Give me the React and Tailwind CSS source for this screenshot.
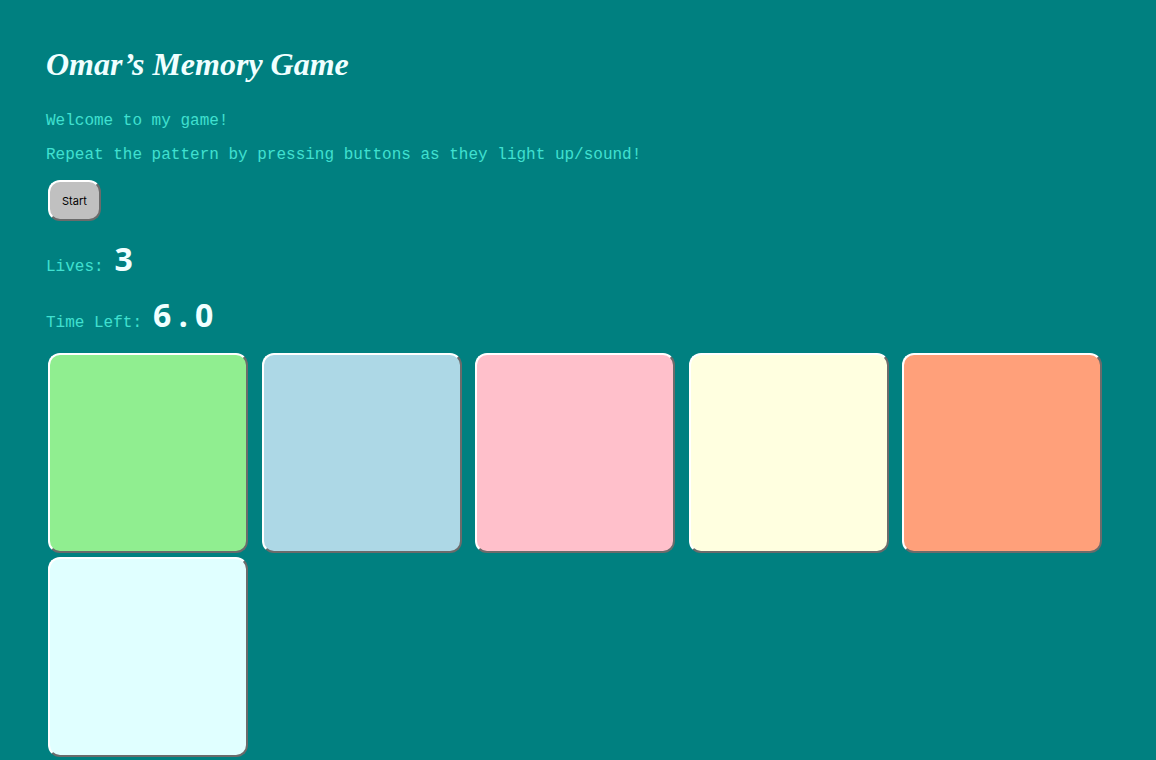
const tiles = [
  { name: 'Green', color: 'bg-[#90ee90]' },
  { name: 'Blue', color: 'bg-[#add8e6]' },
  { name: 'Pink', color: 'bg-[#ffc0cb]' },
  { name: 'Yellow', color: 'bg-[#ffffe0]' },
  { name: 'Salmon', color: 'bg-[#ffa07a]' },
  { name: 'Cyan', color: 'bg-[#e0ffff]' },
];

const bevel = 'border-2 rounded-xl border-t-white border-l-white border-r-[#6b6b6b] border-b-[#6b6b6b]';

function Readout({ label, value }) {
  return (
    <p className="mb-4 h-10 leading-10">
      {label}:{' '}
      <span className="inline-flex font-['Noto_Sans',sans-serif] text-[32px] leading-10 font-bold text-[#f0ffff]">
        {value.split('').map((char, i) => (
          <span key={i} className="w-[21px] text-center">{char}</span>
        ))}
      </span>
    </p>
  );
}

export default function App() {
  return (
    <main className="min-h-screen bg-[#008080] px-[46px] pt-10 font-['Courier_New','Liberation_Mono',monospace] text-base leading-[18px] text-[#40e0d0]">
      <h1 className="mb-6 font-['Apple_Chancery','Liberation_Serif',serif] text-[32px] leading-12 font-bold italic text-[#f0ffff]">
        Omar’s Memory Game
      </h1>
      <p className="mb-4">Welcome to my game!</p>
      <p className="mb-4">Repeat the pattern by pressing buttons as they light up/sound!</p>
      <button
        type="button"
        className={`mx-0.5 mb-[18px] block h-[41px] bg-[#c0c0c0] px-3 font-['Inter',sans-serif] text-[11px] text-black ${bevel}`}
      >
        Start
      </button>
      <Readout label="Lives" value="3" />
      <Readout label="Time Left" value="6.0" />
      <div>
        {tiles.map(({ name, color }) => [
          <button
            key={name}
            type="button"
            aria-label={name}
            className={`m-0.5 inline-block size-[200px] align-bottom ${bevel} ${color}`}
          />,
          ' ',
        ])}
      </div>
    </main>
  );
}
